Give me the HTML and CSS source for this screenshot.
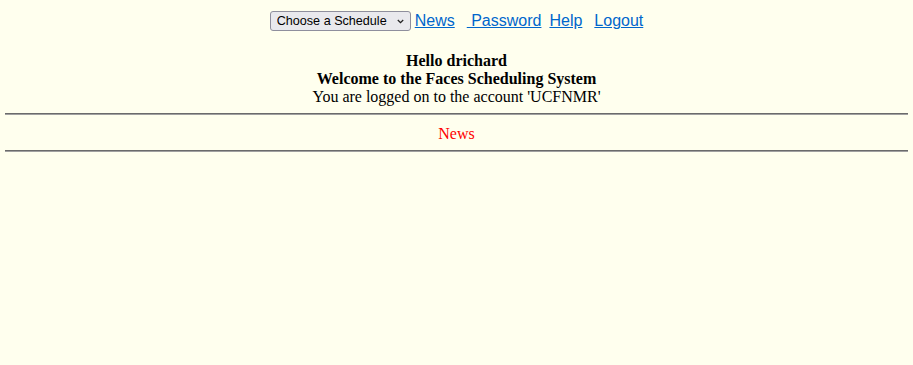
FILE: index.html
```html
<!DOCTYPE html>
<html>
<head>
<meta charset="utf-8">
<link rel="stylesheet" href="styles.css">
</head>
<body>
<div class="nav">
  <span class="selwrap"><select class="sched"><option>Choose a Schedule</option></select><svg class="chev" width="7" height="5" viewBox="0 0 7 5"><path d="M0.8 1 L3.5 3.7 L6.2 1" fill="none" stroke="#222" stroke-width="1.3"/></svg></span><a href="#" class="lnk l1">News</a><a href="#" class="lnk l2">&nbsp;Password</a><a href="#" class="lnk l3">Help</a><a href="#" class="lnk l4">Logout</a>
</div>
<div class="greet">
  <div class="b">Hello drichard</div>
  <div class="b">Welcome to the Faces Scheduling System</div>
  <div>You are logged on to the account 'UCFNMR'</div>
</div>
<hr class="rule">
<div class="news">News</div>
<hr class="rule">
</body>
</html>
```
FILE: styles.css
```css
html, body {
  background: #ffffee;
}
body {
  margin: 0 5px;
  font-family: "Liberation Serif", "Times New Roman", serif;
  font-size: 16px;
  color: #000;
}
.nav {
  display: flex;
  justify-content: center;
  align-items: center;
  padding-top: 11px;
  height: 20px;
  font-family: "Liberation Sans", Arial, sans-serif;
  font-size: 16px;
  line-height: 20px;
}
.selwrap {
  position: relative;
  display: inline-block;
  height: 20px;
}
.sched {
  appearance: none;
  -webkit-appearance: none;
  box-sizing: border-box;
  width: 141px;
  height: 20px;
  margin: 0;
  padding: 0 0 0 6px;
  font-family: "Liberation Sans", Arial, sans-serif;
  font-size: 12.6px;
  background: #e9e9ed;
  border: 1px solid #8f8f9d;
  border-radius: 3px;
  color: #000;
  display: block;
}
.chev {
  position: absolute;
  left: 127px;
  top: 8px;
}
.lnk {
  color: #0066cc;
  text-decoration: underline;
}
.l1 { margin-left: 4px; }
.l2 { margin-left: 12px; }
.l3 { margin-left: 8px; }
.l4 { margin-left: 12px; }
.greet {
  text-align: center;
  margin-top: 21px;
  line-height: 18px;
}
.b {
  font-weight: bold;
}
.rule {
  margin: 7px 0 0 0;
  border: 0;
  border-top: 1px solid #6b6b6b;
  border-bottom: 1px solid #a0a0a0;
  height: 0;
}
.news {
  text-align: center;
  color: #ff0000;
  line-height: 18px;
  padding: 10px 0 0;
}
```
